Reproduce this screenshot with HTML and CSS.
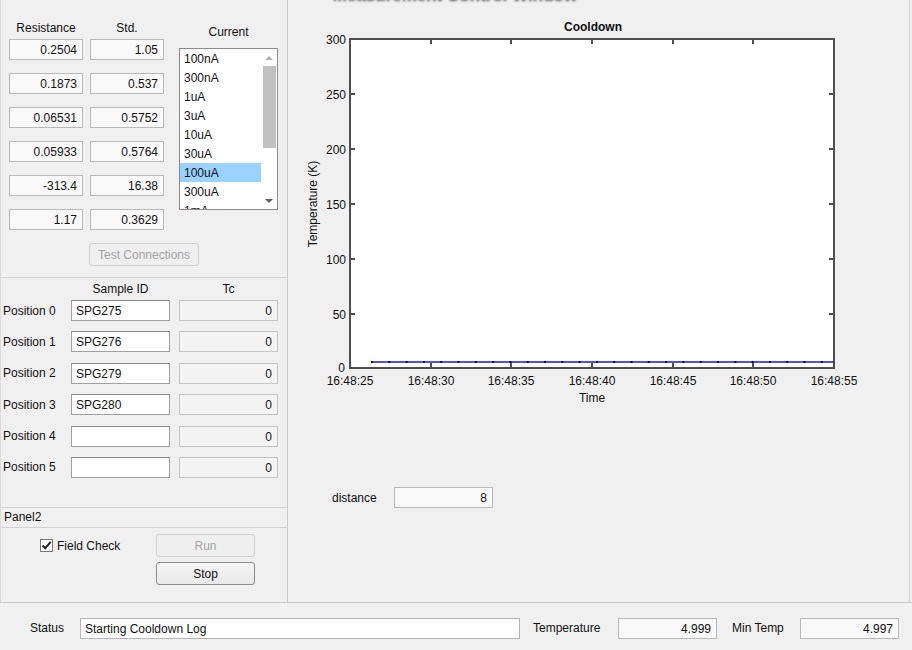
FILE: index.html
```html
<!DOCTYPE html>
<html>
<head>
<meta charset="utf-8">
<link rel="stylesheet" href="styles.css">
</head>
<body>
<div class="app">
  <div class="main">
    <div class="left">
      <section class="meas">
        <div class="meas-top">
          <div class="pair">
            <div class="pair-head"><span>Resistance</span><span>Std.</span></div>
            <div class="pair-grid">
              <div class="box ro">0.2504</div><div class="box ro">1.05</div>
              <div class="box ro">0.1873</div><div class="box ro">0.537</div>
              <div class="box ro">0.06531</div><div class="box ro">0.5752</div>
              <div class="box ro">0.05933</div><div class="box ro">0.5764</div>
              <div class="box ro">-313.4</div><div class="box ro">16.38</div>
              <div class="box ro">1.17</div><div class="box ro">0.3629</div>
            </div>
          </div>
          <div class="cur-col">
            <div class="cur-head">Current</div>
            <div class="listbox">
              <ul class="items">
                <li>100nA</li><li>300nA</li><li>1uA</li><li>3uA</li><li>10uA</li><li>30uA</li><li class="sel">100uA</li><li>300uA</li><li>1mA</li>
              </ul>
              <div class="sb">
                <span class="sb-btn"><span class="arr up"></span></span>
                <span class="thumb"></span>
                <span class="sb-fill"></span>
                <span class="sb-btn"><span class="arr down"></span></span>
              </div>
            </div>
          </div>
        </div>
        <div class="btn-row test-row"><button class="btn disabled wide">Test Connections</button></div>
      </section>

      <section class="samples">
        <div class="samp-head"><span></span><span>Sample ID</span><span>Tc</span></div>
        <div class="samp-grid">
          <span class="plabel">Position 0</span><div class="box edit">SPG275</div><div class="box tc">0</div>
          <span class="plabel">Position 1</span><div class="box edit">SPG276</div><div class="box tc">0</div>
          <span class="plabel">Position 2</span><div class="box edit">SPG279</div><div class="box tc">0</div>
          <span class="plabel">Position 3</span><div class="box edit">SPG280</div><div class="box tc">0</div>
          <span class="plabel">Position 4</span><div class="box edit"></div><div class="box tc">0</div>
          <span class="plabel">Position 5</span><div class="box edit"></div><div class="box tc">0</div>
        </div>
      </section>

      <div class="p2-title">Panel2</div>
      <section class="p2">
        <label class="chk">
          <span class="chkbox"><svg width="11" height="11" viewBox="0 0 11 11"><path d="M1.5 5.5 L4.2 8.3 L9.6 1.8" fill="none" stroke="#222" stroke-width="2"/></svg></span>
          <span>Field Check</span>
        </label>
        <div class="p2-btns">
          <button class="btn disabled">Run</button>
          <button class="btn">Stop</button>
        </div>
      </section>
    </div>

    <div class="right">
      <svg class="plot" width="620" height="487" viewBox="288 0 620 487">
        <defs><filter id="bl" x="-10%" y="-100%" width="120%" height="300%"><feGaussianBlur stdDeviation="1.3"/></filter></defs>
        <text class="blurtitle" x="455" y="1" text-anchor="middle" filter="url(#bl)">Measurement Control Window</text>
        <text class="ptitle" x="593" y="31" text-anchor="middle">Cooldown</text>
        <rect x="350" y="39" width="484" height="329" fill="#fff" stroke="#4f4f4f" stroke-width="2"/>
        <path d="M431 39v5M511 39v5M592 39v5M673 39v5M753 39v5M431 368v-5M511 368v-5M592 368v-5M673 368v-5M753 368v-5M350 94h5M350 149h5M350 204h5M350 259h5M350 314h5M834 94h-5M834 149h-5M834 204h-5M834 259h-5M834 314h-5" stroke="#4f4f4f" stroke-width="2"/>
        <g class="ylab" text-anchor="end">
          <text x="346" y="44">300</text>
          <text x="346" y="99">250</text>
          <text x="346" y="154">200</text>
          <text x="346" y="209">150</text>
          <text x="346" y="264">100</text>
          <text x="346" y="319">50</text>
          <text x="345" y="372">0</text>
        </g>
        <g class="xlab" text-anchor="middle">
          <text x="350" y="385">16:48:25</text>
          <text x="431" y="385">16:48:30</text>
          <text x="511" y="385">16:48:35</text>
          <text x="592" y="385">16:48:40</text>
          <text x="673" y="385">16:48:45</text>
          <text x="753" y="385">16:48:50</text>
          <text x="834" y="385">16:48:55</text>
        </g>
        <text x="592" y="402" text-anchor="middle">Time</text>
        <text x="317" y="204" text-anchor="middle" transform="rotate(-90 317 204)">Temperature (K)</text>
        <line x1="371" y1="362" x2="834" y2="362" stroke="#1a1acc" stroke-width="1.5"/>
        <line x1="371" y1="362" x2="834" y2="362" stroke="#00007a" stroke-width="2" stroke-dasharray="2 15.3"/>
      </svg>
      <div class="dist-row">
        <span class="dlabel">distance</span>
        <div class="box ro dbox">8</div>
      </div>
    </div>
  </div>

  <div class="statusbar">
    <span class="s-label l-status">Status</span>
    <div class="box st-box">Starting Cooldown Log</div>
    <span class="s-label l-temp">Temperature</span>
    <div class="box ro num-box">4.999</div>
    <span class="s-label l-min">Min Temp</span>
    <div class="box ro num-box">4.997</div>
  </div>
</div>
</body>
</html>
```

FILE: styles.css
```css
* { box-sizing: border-box; }
html, body { margin: 0; padding: 0; }
body {
  width: 912px;
  height: 650px;
  overflow: hidden;
  background: #f0f0f0;
  font-family: "Liberation Sans", Arial, sans-serif;
  font-size: 12px;
  color: #111;
}
.app {
  display: grid;
  grid-template-rows: 603px 47px;
  height: 650px;
}
.main {
  display: grid;
  grid-template-columns: 288px 622px;
  border-bottom: 1px solid #c9c9c9;
}
.left {
  display: flex;
  flex-direction: column;
  border-right: 1px solid #c9c9c9;
  border-left: 1px solid #dadada;
}

/* text boxes */
.box {
  height: 21px;
  line-height: 20px;
  border: 1px solid #b9b9b9;
  white-space: nowrap;
  overflow: hidden;
}
.box.ro {
  background: #f9f9f9;
  text-align: right;
  padding-right: 5px;
}
.box.edit {
  background: #fff;
  border-color: #a0a0a0;
  border-top-color: #8a8a8a;
  padding-left: 4px;
}
.box.tc {
  background: #f4f4f4;
  border-color: #c4c4c4;
  text-align: right;
  padding-right: 5px;
}

/* measurement section */
.meas {
  height: 278px;
  border-bottom: 1px solid #d2d2d2;
  padding: 0 0 0 8px;
}
.meas-top { display: flex; }
.pair { padding-top: 21px; width: 155px; }
.pair-head {
  display: grid;
  grid-template-columns: 74px 74px;
  column-gap: 7px;
  height: 18px;
  line-height: 14px;
  text-align: center;
}
.pair-grid {
  display: grid;
  grid-template-columns: 74px 74px;
  grid-auto-rows: 21px;
  column-gap: 7px;
  row-gap: 13px;
}
.cur-col { margin-left: 15px; padding-top: 25px; width: 99px; }
.cur-head { text-align: center; line-height: 14px; height: 14px; margin-bottom: 9px; }
.listbox {
  display: flex;
  height: 162px;
  border: 1px solid #8c8c8c;
  background: #fff;
  overflow: hidden;
}
.items { flex: 1; list-style: none; margin: 0; padding: 0; }
.items li { height: 19px; line-height: 20px; padding-left: 4px; white-space: nowrap; }
.items li.sel { background: #99d1ff; }
.sb {
  width: 16px;
  display: flex;
  flex-direction: column;
  align-items: center;
  background: #fff;
}
.sb-btn { height: 17px; width: 16px; display: flex; align-items: center; justify-content: center; }
.thumb { width: 13px; height: 82px; background: #c1c1c1; }
.sb-fill { flex: 1; }
.arr { width: 0; height: 0; border-left: 4px solid transparent; border-right: 4px solid transparent; }
.arr.up { border-bottom: 4px solid #b3b3b3; }
.arr.down { border-top: 4px solid #606060; }

.btn-row { display: flex; }
.test-row { margin-top: 13px; padding-left: 80px; }
.btn {
  font-family: inherit;
  font-size: 12px;
  width: 99px;
  height: 23px;
  border: 1px solid #8c8c8c;
  border-radius: 3px;
  background: linear-gradient(#f6f6f6, #e8e8e8);
  color: #111;
  padding: 0;
}
.btn.disabled {
  border-color: #d2d2d2;
  background: #efefef;
  color: #a3a3a3;
}
.btn.wide { width: 110px; }

/* samples */
.samples {
  height: 230px;
  border-bottom: 1px solid #d2d2d2;
  padding: 4px 0 0 2px;
}
.samp-head, .samp-grid {
  display: grid;
  grid-template-columns: 59px 99px 99px;
  column-gap: 9px;
}
.samp-head { height: 18px; line-height: 14px; text-align: center; }
.samp-grid { grid-auto-rows: 21px; row-gap: 10.4px; align-items: center; }
.plabel { white-space: nowrap; }

/* panel2 */
.p2-title {
  height: 20px;
  line-height: 19px;
  padding-left: 3px;
  border-bottom: 1px solid #d2d2d2;
}
.p2 {
  flex: 1;
  display: flex;
  padding: 6px 0 0 39px;
}
.chk {
  display: flex;
  align-items: center;
  gap: 4px;
  height: 23px;
  width: 116px;
}
.chkbox {
  width: 13px;
  height: 13px;
  border: 1px solid #777;
  background: #fff;
  display: flex;
  align-items: center;
  justify-content: center;
}
.chkbox svg { display: block; }
.p2-btns { display: flex; flex-direction: column; gap: 5px; }

/* right pane */
.right { border-right: 1px solid #d6d6d6; }
.plot { display: block; font-family: "Liberation Sans", Arial, sans-serif; font-size: 12px; fill: #111; }
.blurtitle { font-size: 17px; font-weight: bold; fill: #444; }
.ptitle { font-weight: bold; }
.dist-row { display: flex; align-items: center; padding-left: 44px; }
.dlabel { width: 62px; }
.dbox { width: 99px; }

/* status bar */
.statusbar {
  display: flex;
  padding-top: 15px;
  align-items: flex-start;
}
.s-label { line-height: 21px; height: 21px; white-space: nowrap; }
.l-status { margin-left: 30px; width: 34px; }
.st-box { width: 440px; margin-left: 16px; background: #fff; padding-left: 4px; border-color: #b5b5b5; }
.l-temp { margin-left: 13px; width: 70px; }
.l-min { margin-left: 15px; width: 53px; }
.num-box { width: 99px; margin-left: 15px; }
```
